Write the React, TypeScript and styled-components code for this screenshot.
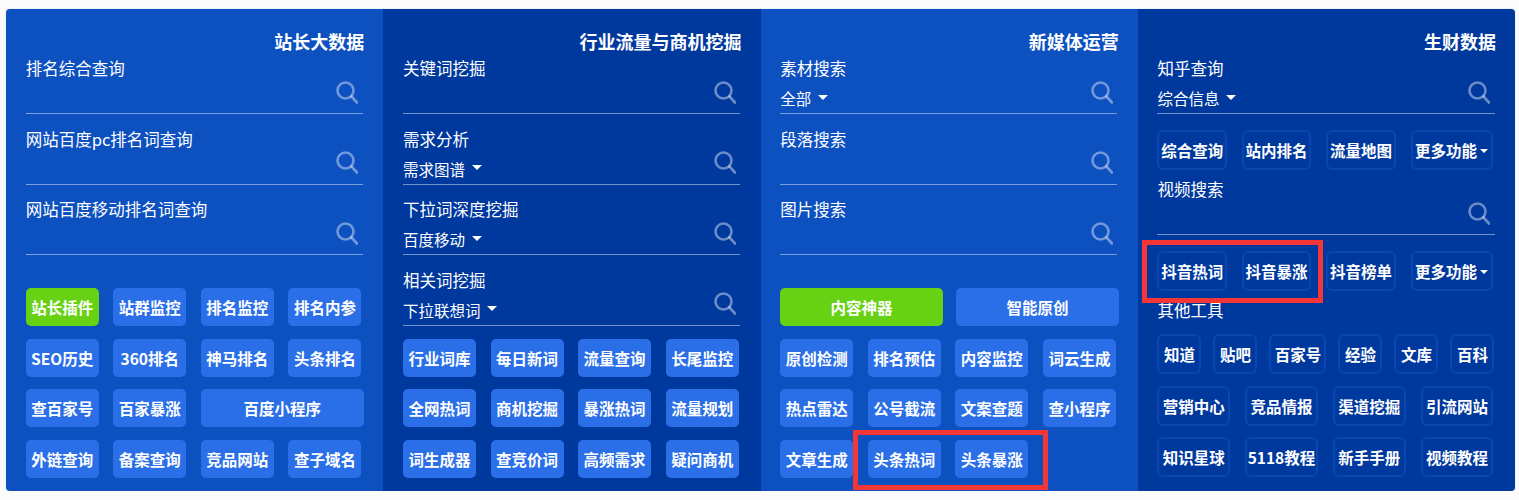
import React from 'react';
import styled, { createGlobalStyle } from 'styled-components';

const Global = createGlobalStyle`
  html, body { margin: 0; padding: 0; background: #fbfbfc; }
  body { font-family: "Noto Sans CJK SC", "Liberation Sans", sans-serif; }
`;

const Board = styled.div`
  position: relative;
  box-sizing: border-box;
  width: 1509px;
  height: 482px;
  margin: 9px 0 0 6px;
  display: grid;
  grid-template-columns: repeat(4, minmax(0, 1fr));
  grid-template-rows: 100%;
  border-radius: 4px;
  overflow: hidden;
  box-shadow: 0 0 1px rgba(13, 80, 192, 0.5);
`;

const Panel = styled.section<{ $dark?: boolean }>`
  box-sizing: border-box;
  min-width: 0;
  display: flex;
  flex-direction: column;
  padding: 21px 20.5px 13px 19.7px;
  background: ${p => (p.$dark ? '#00399e' : '#0d50c0')};
  color: #fff;
`;

const Title = styled.h2`
  margin: 0 -1.5px 0 0;
  font-size: 18px;
  line-height: 23px;
  font-weight: 700;
  text-align: right;
`;

const Search = styled.div<{ $after?: number }>`
  margin-bottom: ${p => p.$after ?? 9.6}px;
`;

const Label = styled.div`
  font-size: 16.5px;
  line-height: 30px;
  height: 30px;
  white-space: nowrap;
`;

const Field = styled.div`
  box-sizing: content-box;
  display: flex;
  align-items: center;
  justify-content: space-between;
  height: 30px;
  padding-right: 4.5px;
  border-bottom: 1px solid rgba(255, 255, 255, 0.45);
`;

const Select = styled.span`
  display: inline-flex;
  align-items: center;
  gap: 7px;
  font-size: 15.5px;
  line-height: 30px;
`;

const Caret = styled.i`
  display: block;
  width: 0;
  height: 0;
  margin-top: -2px;
  border-left: 5px solid transparent;
  border-right: 5px solid transparent;
  border-top: 5.5px solid #fff;
`;

const SmallCaret = styled(Caret)`
  margin: 1px 0 0 3px;
  border-left-width: 4.5px;
  border-right-width: 4.5px;
  border-top-width: 4.5px;
`;

const SearchMark = styled.svg`
  display: block;
  width: 22px;
  height: 23px;
  margin-top: -12px;
  fill: none;
  stroke: rgba(255, 255, 255, 0.42);
  stroke-width: 2.6;
  stroke-linecap: round;
`;

const Buttons = styled.div`
  margin-top: auto;
  display: flex;
  flex-direction: column;
  gap: 12.7px;
`;

const Row = styled.div<{ $gap?: number }>`
  display: flex;
  gap: ${p => p.$gap ?? 14.6}px;
`;

const Btn = styled.a<{ $w?: number; $green?: boolean }>`
  flex: none;
  box-sizing: border-box;
  width: ${p => p.$w ?? 73}px;
  height: 38px;
  display: flex;
  align-items: center;
  justify-content: center;
  border-radius: 5px;
  background: ${p => (p.$green ? '#67d214' : '#2a6fe8')};
  font-size: 15.5px;
  font-weight: 700;
  white-space: nowrap;
  color: #fff;
`;

const OutlineStack = styled.div`
  display: flex;
  flex-direction: column;
  gap: 11.5px;
  margin-top: 9px;
`;

const OutlineRow = styled.div<{ $gap: number; $top: number; $bottom: number }>`
  display: flex;
  gap: ${p => p.$gap}px;
  margin: ${p => p.$top}px 0 ${p => p.$bottom}px;
`;

const OutlineBtn = styled(Btn)`
  height: 40px;
  background: transparent;
  border: 2px solid #0a46b0;
  border-radius: 6px;
`;

const Highlight = styled.div<{ $x: number; $y: number; $w: number; $h: number }>`
  position: absolute;
  box-sizing: border-box;
  left: ${p => p.$x}px;
  top: ${p => p.$y}px;
  width: ${p => p.$w}px;
  height: ${p => p.$h}px;
  border: 5px solid #f53636;
  pointer-events: none;
`;

const Icon = () => (
  <SearchMark viewBox="0 0 22 23">
    <circle cx="9.5" cy="9.5" r="8" />
    <line x1="15.5" y1="15.5" x2="21" y2="21.5" />
  </SearchMark>
);

const Query = ({ label, value, after }: { label: string; value?: string; after?: number }) => (
  <Search $after={after}>
    <Label>{label}</Label>
    <Field>
      {value ? (
        <Select>
          {value}
          <Caret />
        </Select>
      ) : (
        <span />
      )}
      <Icon />
    </Field>
  </Search>
);

const Grid = ({ rows, gap }: { rows: (string | [string, number, boolean?])[][]; gap?: number }) => (
  <Buttons>
    {rows.map((r, i) => (
      <Row key={i} $gap={r.length === 2 ? 13.4 : gap}>
        {r.map(b =>
          typeof b === 'string' ? (
            <Btn key={b}>{b}</Btn>
          ) : (
            <Btn key={b[0]} $w={b[1]} $green={b[2]}>
              {b[0]}
            </Btn>
          )
        )}
      </Row>
    ))}
  </Buttons>
);

const Outline = ({
  items,
  gap,
  w,
  top = 0,
  bottom = 0,
}: {
  items: string[];
  gap: number;
  w: number[];
  top?: number;
  bottom?: number;
}) => (
  <OutlineRow $gap={gap} $top={top} $bottom={bottom}>
    {items.map((t, i) => (
      <OutlineBtn key={t} $w={w[i]}>
        {t}
        {t === '更多功能' && <SmallCaret />}
      </OutlineBtn>
    ))}
  </OutlineRow>
);

const toolWidths = [69.4, 69.4, 69.4, 82];
const wideTools = [72.5, 72.5, 72.5, 72.5];

export default function App() {
  return (
    <>
      <Global />
      <Board>
        <Panel>
          <Title>站长大数据</Title>
          <Query label="排名综合查询" />
          <Query label="网站百度pc排名词查询" />
          <Query label="网站百度移动排名词查询" />
          <Grid
            rows={[
              [['站长插件', 73, true], '站群监控', '排名监控', '排名内参'],
              ['SEO历史', '360排名', '神马排名', '头条排名'],
              ['查百家号', '百家暴涨', ['百度小程序', 163]],
              ['外链查询', '备案查询', '竞品网站', '查子域名'],
            ]}
          />
        </Panel>
        <Panel $dark>
          <Title>行业流量与商机挖掘</Title>
          <Query label="关键词挖掘" />
          <Query label="需求分析" value="需求图谱" />
          <Query label="下拉词深度挖掘" value="百度移动" />
          <Query label="相关词挖掘" value="下拉联想词" />
          <Grid
            rows={[
              ['行业词库', '每日新词', '流量查询', '长尾监控'],
              ['全网热词', '商机挖掘', '暴涨热词', '流量规划'],
              ['词生成器', '查竞价词', '高频需求', '疑问商机'],
            ]}
          />
        </Panel>
        <Panel>
          <Title>新媒体运营</Title>
          <Query label="素材搜索" value="全部" />
          <Query label="段落搜索" />
          <Query label="图片搜索" />
          <Grid
            rows={[
              [['内容神器', 162.6, true], ['智能原创', 162.6]],
              ['原创检测', '排名预估', '内容监控', '词云生成'],
              ['热点雷达', '公号截流', '文案查题', '查小程序'],
              ['文章生成', '头条热词', '头条暴涨'],
            ]}
          />
        </Panel>
        <Panel $dark>
          <Title>生财数据</Title>
          <Query label="知乎查询" value="综合信息" after={0} />
          <Outline top={16} bottom={4} gap={15} items={['综合查询', '站内排名', '流量地图', '更多功能']} w={toolWidths} />
          <Query label="视频搜索" after={0} />
          <Outline top={16} bottom={4} gap={15} items={['抖音热词', '抖音暴涨', '抖音榜单', '更多功能']} w={toolWidths} />
          <Label>其他工具</Label>
          <OutlineStack>
            <Outline gap={12} items={['知道', '贴吧', '百家号', '经验', '文库', '百科']} w={[44, 44, 57, 44, 44, 44]} />
            <Outline gap={15.3} items={['营销中心', '竞品情报', '渠道挖掘', '引流网站']} w={wideTools} />
            <Outline gap={15.3} items={['知识星球', '5118教程', '新手手册', '视频教程']} w={wideTools} />
          </OutlineStack>
        </Panel>
        <Highlight $x={847} $y={421} $w={195} $h={60} />
        <Highlight $x={1136} $y={231} $w={181} $h={63} />
      </Board>
    </>
  );
}
